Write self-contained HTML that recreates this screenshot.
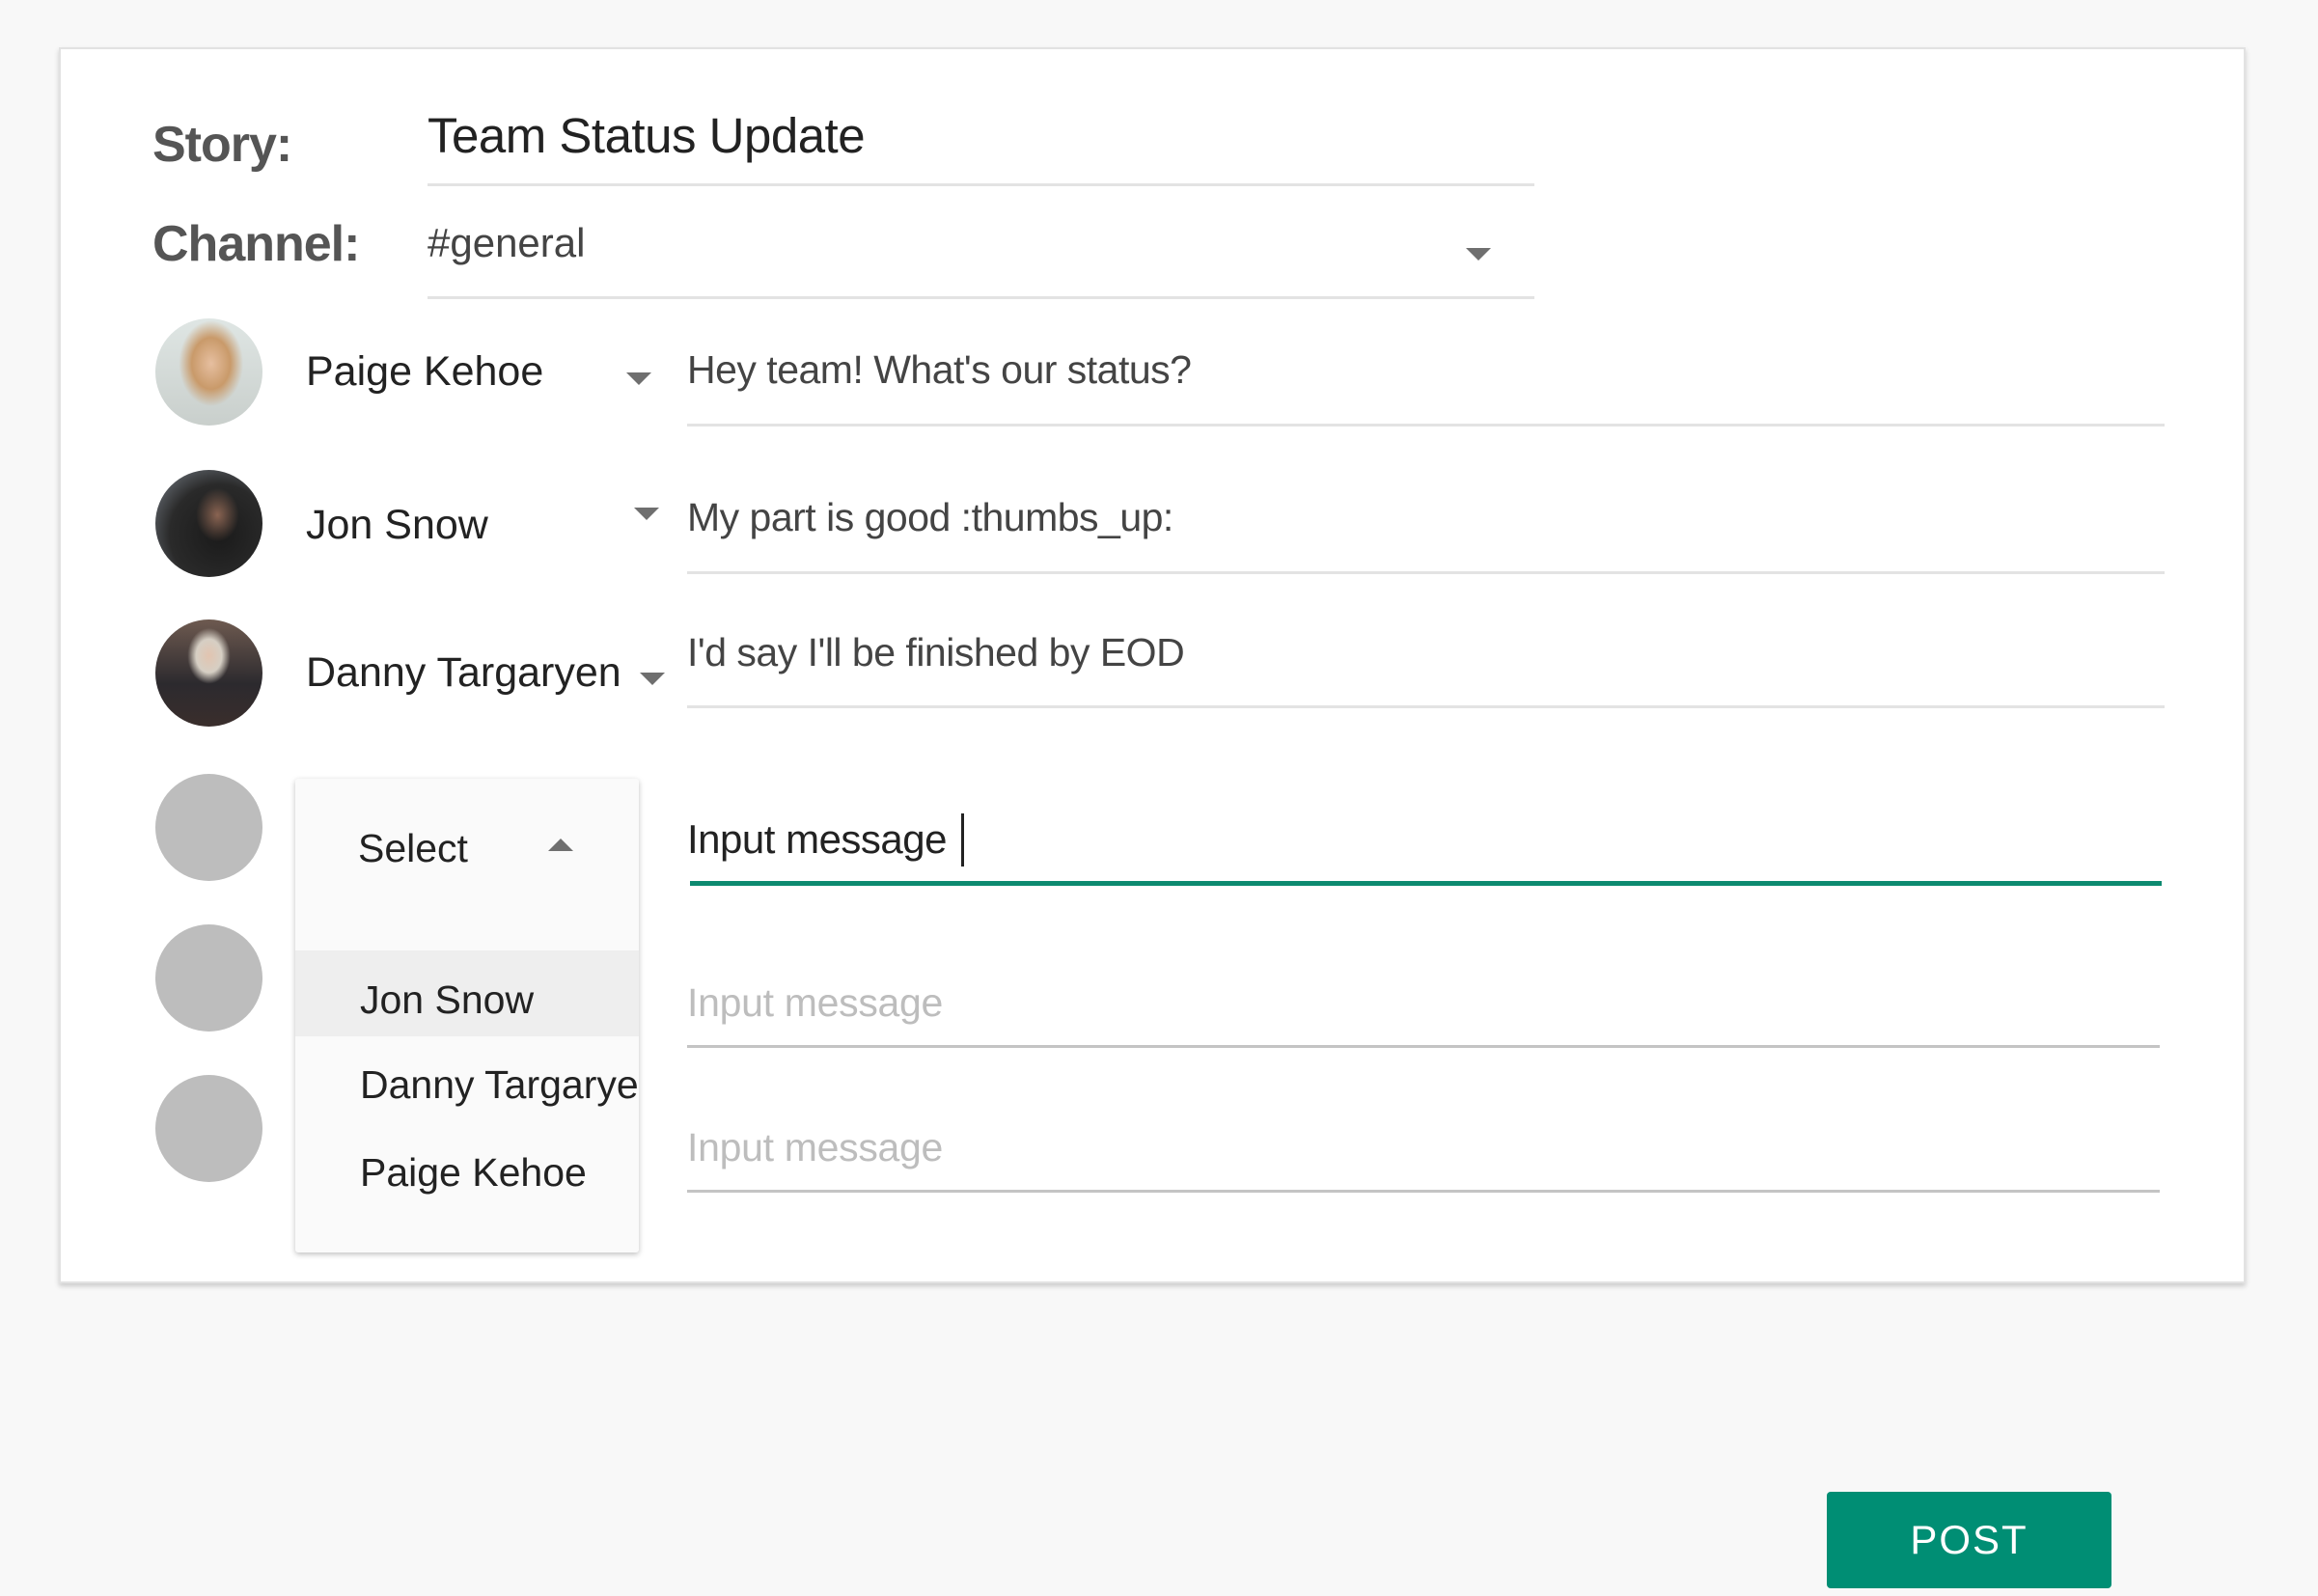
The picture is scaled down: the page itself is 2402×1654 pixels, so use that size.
<!DOCTYPE html>
<html><head><meta charset="utf-8"><style>
*{margin:0;padding:0;box-sizing:border-box}
body{width:2402px;height:1654px;background:#f8f8f8;position:relative;overflow:hidden;font-family:"Liberation Sans",sans-serif}
.a{position:absolute;white-space:nowrap}
.card{position:absolute;left:61px;top:49px;width:2266px;height:1281px;background:#fff;border:2px solid #e2e2e2;box-shadow:0 3px 5px rgba(0,0,0,.18)}
.t{line-height:60px;height:60px}
.ln{position:absolute;height:3px;background:#e3e3e3}
.av{position:absolute;left:161px;width:111px;height:111px;border-radius:50%}
.tri{position:absolute;width:0;height:0;border-left:13px solid transparent;border-right:13px solid transparent;border-top:13px solid #6f6f6f}
.msg{font-size:41px;color:#444;letter-spacing:-0.5px}
.ph{font-size:41px;color:#bdbdbd;letter-spacing:-0.3px}
.nm{font-size:43px;color:#222}
</style></head><body>
<div class="card"></div>
<div class="a t" style="left:158px;top:120px;font-size:52px;color:#555;font-weight:bold;letter-spacing:-1px">Story:</div>
<div class="a t" style="left:443px;top:111px;font-size:51px;color:#222;letter-spacing:-0.5px">Team Status Update</div>
<div class="ln" style="left:443px;top:190px;width:1147px"></div>
<div class="a t" style="left:158px;top:223px;font-size:52px;color:#555;font-weight:bold;letter-spacing:-1px">Channel:</div>
<div class="a t" style="left:443px;top:222px;font-size:42px;color:#444">#general</div>
<div class="tri" style="left:1519px;top:257px"></div>
<div class="ln" style="left:443px;top:307px;width:1147px"></div>

<div class="av" style="top:330px;background:radial-gradient(ellipse 30% 40% at 52% 42%,#e6bfa0 0%,#c99a6a 60%,rgba(190,150,110,0) 100%),linear-gradient(#dfe6e4,#c9cfcc)"></div>
<div class="av" style="top:487px;background:radial-gradient(ellipse 20% 25% at 58% 42%,#8a6452 0%,rgba(40,30,30,0) 100%),radial-gradient(circle at 60% 60%,#1a1a1a 0%,#2a2a2a 55%,#7d858f 100%)"></div>
<div class="av" style="top:642px;background:radial-gradient(ellipse 20% 26% at 50% 34%,#e2c4b0 0%,#d6cfc4 60%,rgba(60,50,50,0) 100%),linear-gradient(#6e5a50,#2c2a2e 60%,#3a2e2c)"></div>
<div class="av" style="top:802px;background:#bdbdbd"></div>
<div class="av" style="top:958px;background:#bdbdbd"></div>
<div class="av" style="top:1114px;background:#bdbdbd"></div>

<div class="a t nm" style="left:317px;top:355px">Paige Kehoe</div>
<div class="tri" style="left:649px;top:386px"></div>
<div class="a t nm" style="left:317px;top:514px">Jon Snow</div>
<div class="tri" style="left:657px;top:526px"></div>
<div class="a t nm" style="left:317px;top:667px">Danny Targaryen</div>
<div class="tri" style="left:663px;top:697px"></div>

<div class="a t msg" style="left:712px;top:353px">Hey team! What's our status?</div>
<div class="ln" style="left:712px;top:439px;width:1531px"></div>
<div class="a t msg" style="left:712px;top:506px">My part is good :thumbs_up:</div>
<div class="ln" style="left:712px;top:592px;width:1531px"></div>
<div class="a t msg" style="left:712px;top:646px">I'd say I'll be finished by EOD</div>
<div class="ln" style="left:712px;top:731px;width:1531px"></div>
<div class="a t" style="left:712px;top:840px;font-size:42px;color:#222;letter-spacing:-0.5px">Input message</div>
<div class="a" style="left:996px;top:843px;width:3px;height:55px;background:#222"></div>
<div class="ln" style="left:715px;top:913px;width:1525px;height:5px;background:#0d8a70"></div>
<div class="a t ph" style="left:712px;top:1009px">Input message</div>
<div class="ln" style="left:712px;top:1083px;width:1526px;background:#c4c4c4"></div>
<div class="a t ph" style="left:712px;top:1159px">Input message</div>
<div class="ln" style="left:712px;top:1233px;width:1526px;background:#c4c4c4"></div>

<div class="a" style="left:306px;top:807px;width:356px;height:491px;background:#fafafa;border-radius:3px;box-shadow:0 2px 6px rgba(0,0,0,.25);overflow:hidden">
 <div class="a t nm" style="left:65px;top:42px;font-size:41px">Select</div>
 <div class="a" style="left:262px;top:62px;width:0;height:0;border-left:13px solid transparent;border-right:13px solid transparent;border-bottom:13px solid #6f6f6f"></div>
 <div class="a" style="left:0;top:178px;width:356px;height:89px;background:#eeeeee"></div>
 <div class="a t nm" style="left:67px;top:199px;font-size:41px">Jon Snow</div>
 <div class="a t nm" style="left:67px;top:287px;font-size:41px">Danny Targaryen</div>
 <div class="a t nm" style="left:67px;top:378px;font-size:41px">Paige Kehoe</div>
</div>

<div class="a" style="left:1893px;top:1546px;width:295px;height:100px;background:#008e74;border-radius:4px;color:#fff;font-size:42px;line-height:100px;text-align:center;letter-spacing:2px">POST</div>
</body></html>
